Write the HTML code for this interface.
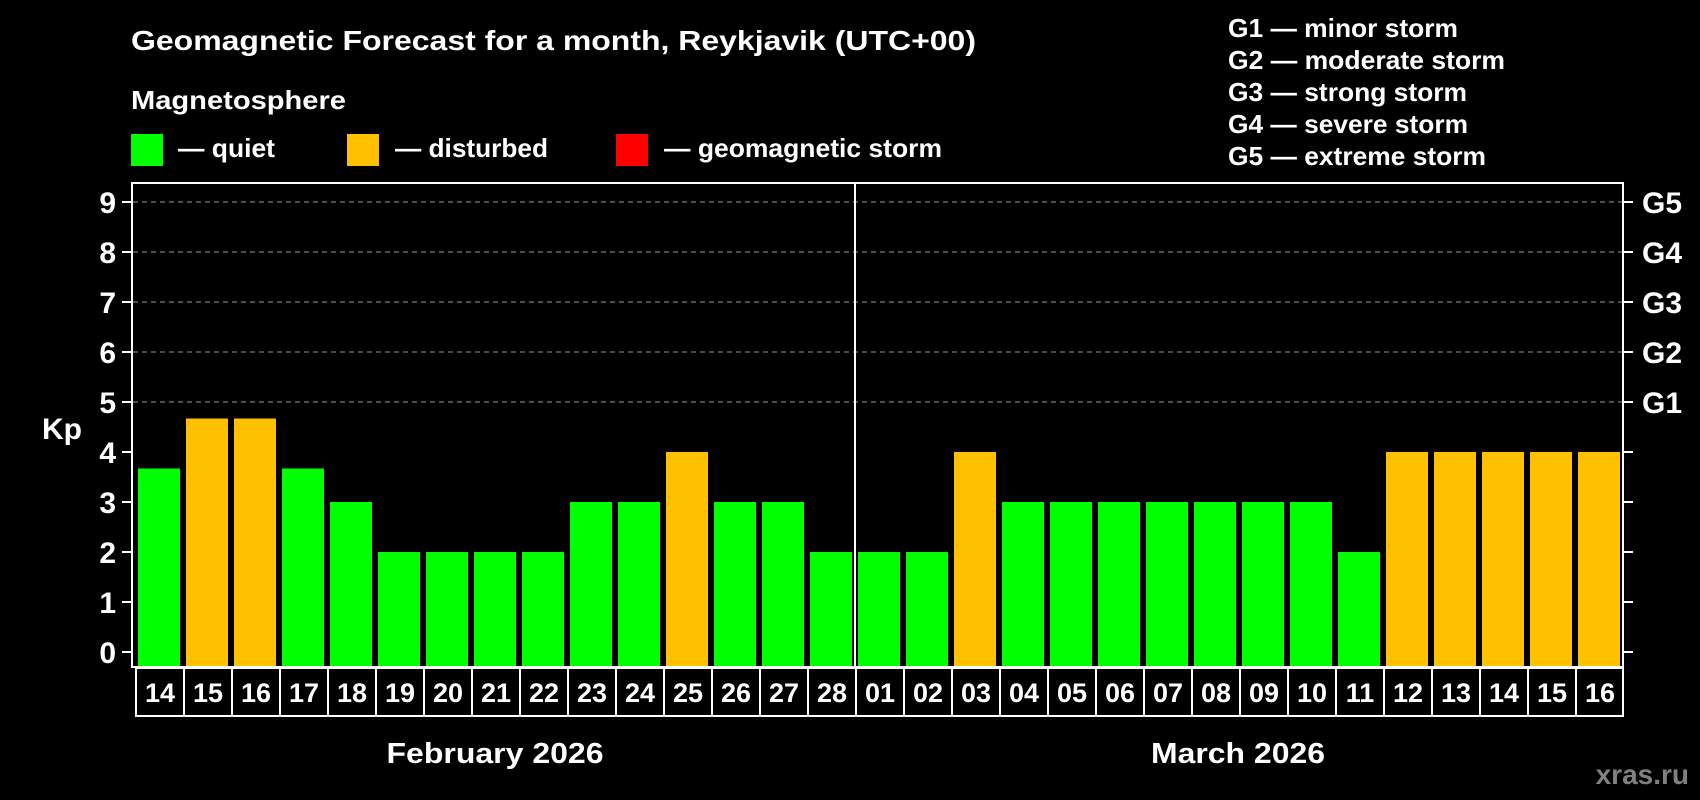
<!DOCTYPE html>
<html><head><meta charset="utf-8"><style>html,body{margin:0;padding:0;background:#000;}svg{display:block}</style></head>
<body>
<svg width="1700" height="800" viewBox="0 0 1700 800" xmlns="http://www.w3.org/2000/svg" font-family="Liberation Sans, Arial, sans-serif" font-weight="bold" fill="#fff">
<rect width="1700" height="800" fill="#000"/>
<text x="131" y="50" font-size="28" textLength="845" lengthAdjust="spacingAndGlyphs">Geomagnetic Forecast for a month, Reykjavik (UTC+00)</text>
<text x="131" y="109" font-size="26" textLength="215" lengthAdjust="spacingAndGlyphs">Magnetosphere</text>
<rect x="131" y="134" width="32" height="32" fill="#00ff00"/>
<text x="178" y="157" font-size="26" textLength="97" lengthAdjust="spacingAndGlyphs">— quiet</text>
<rect x="347" y="134" width="32" height="32" fill="#ffc000"/>
<text x="395" y="157" font-size="26" textLength="153" lengthAdjust="spacingAndGlyphs">— disturbed</text>
<rect x="616" y="134" width="32" height="32" fill="#ff0000"/>
<text x="664" y="157" font-size="26" textLength="278" lengthAdjust="spacingAndGlyphs">— geomagnetic storm</text>
<g font-size="26">
<text x="1228" y="37" textLength="230" lengthAdjust="spacingAndGlyphs">G1 — minor storm</text>
<text x="1228" y="69" textLength="277" lengthAdjust="spacingAndGlyphs">G2 — moderate storm</text>
<text x="1228" y="101" textLength="239" lengthAdjust="spacingAndGlyphs">G3 — strong storm</text>
<text x="1228" y="133" textLength="240" lengthAdjust="spacingAndGlyphs">G4 — severe storm</text>
<text x="1228" y="165" textLength="258" lengthAdjust="spacingAndGlyphs">G5 — extreme storm</text>
</g>
<g stroke="#999" stroke-width="1" stroke-dasharray="5,4">
<line x1="133" y1="202" x2="1622" y2="202"/>
<line x1="133" y1="252" x2="1622" y2="252"/>
<line x1="133" y1="302" x2="1622" y2="302"/>
<line x1="133" y1="352" x2="1622" y2="352"/>
<line x1="133" y1="402" x2="1622" y2="402"/>
</g>
<g>
<rect x="138" y="468.5" width="42" height="198.5" fill="#00ff00"/>
<rect x="186" y="418.5" width="42" height="248.5" fill="#ffc000"/>
<rect x="234" y="418.5" width="42" height="248.5" fill="#ffc000"/>
<rect x="282" y="468.5" width="42" height="198.5" fill="#00ff00"/>
<rect x="330" y="502" width="42" height="165" fill="#00ff00"/>
<rect x="378" y="552" width="42" height="115" fill="#00ff00"/>
<rect x="426" y="552" width="42" height="115" fill="#00ff00"/>
<rect x="474" y="552" width="42" height="115" fill="#00ff00"/>
<rect x="522" y="552" width="42" height="115" fill="#00ff00"/>
<rect x="570" y="502" width="42" height="165" fill="#00ff00"/>
<rect x="618" y="502" width="42" height="165" fill="#00ff00"/>
<rect x="666" y="452" width="42" height="215" fill="#ffc000"/>
<rect x="714" y="502" width="42" height="165" fill="#00ff00"/>
<rect x="762" y="502" width="42" height="165" fill="#00ff00"/>
<rect x="810" y="552" width="42" height="115" fill="#00ff00"/>
<rect x="858" y="552" width="42" height="115" fill="#00ff00"/>
<rect x="906" y="552" width="42" height="115" fill="#00ff00"/>
<rect x="954" y="452" width="42" height="215" fill="#ffc000"/>
<rect x="1002" y="502" width="42" height="165" fill="#00ff00"/>
<rect x="1050" y="502" width="42" height="165" fill="#00ff00"/>
<rect x="1098" y="502" width="42" height="165" fill="#00ff00"/>
<rect x="1146" y="502" width="42" height="165" fill="#00ff00"/>
<rect x="1194" y="502" width="42" height="165" fill="#00ff00"/>
<rect x="1242" y="502" width="42" height="165" fill="#00ff00"/>
<rect x="1290" y="502" width="42" height="165" fill="#00ff00"/>
<rect x="1338" y="552" width="42" height="115" fill="#00ff00"/>
<rect x="1386" y="452" width="42" height="215" fill="#ffc000"/>
<rect x="1434" y="452" width="42" height="215" fill="#ffc000"/>
<rect x="1482" y="452" width="42" height="215" fill="#ffc000"/>
<rect x="1530" y="452" width="42" height="215" fill="#ffc000"/>
<rect x="1578" y="452" width="42" height="215" fill="#ffc000"/>
</g>
<line x1="855" y1="183" x2="855" y2="667" stroke="#fff" stroke-width="2"/>
<rect x="132" y="183" width="1491" height="484" fill="none" stroke="#fff" stroke-width="2"/>
<g stroke="#fff" stroke-width="2">
<line x1="122" y1="652" x2="131" y2="652"/><line x1="1623" y1="652" x2="1633" y2="652"/>
<line x1="122" y1="602" x2="131" y2="602"/><line x1="1623" y1="602" x2="1633" y2="602"/>
<line x1="122" y1="552" x2="131" y2="552"/><line x1="1623" y1="552" x2="1633" y2="552"/>
<line x1="122" y1="502" x2="131" y2="502"/><line x1="1623" y1="502" x2="1633" y2="502"/>
<line x1="122" y1="452" x2="131" y2="452"/><line x1="1623" y1="452" x2="1633" y2="452"/>
<line x1="122" y1="402" x2="131" y2="402"/><line x1="1623" y1="402" x2="1633" y2="402"/>
<line x1="122" y1="352" x2="131" y2="352"/><line x1="1623" y1="352" x2="1633" y2="352"/>
<line x1="122" y1="302" x2="131" y2="302"/><line x1="1623" y1="302" x2="1633" y2="302"/>
<line x1="122" y1="252" x2="131" y2="252"/><line x1="1623" y1="252" x2="1633" y2="252"/>
<line x1="122" y1="202" x2="131" y2="202"/><line x1="1623" y1="202" x2="1633" y2="202"/>
</g>
<g font-size="30" text-anchor="end">
<text x="116" y="663">0</text><text x="116" y="613">1</text><text x="116" y="563">2</text><text x="116" y="513">3</text><text x="116" y="463">4</text>
<text x="116" y="413">5</text><text x="116" y="363">6</text><text x="116" y="313">7</text><text x="116" y="263">8</text><text x="116" y="213">9</text>
</g>
<g font-size="30">
<text x="1642" y="213">G5</text><text x="1642" y="263">G4</text><text x="1642" y="313">G3</text><text x="1642" y="363">G2</text><text x="1642" y="413">G1</text>
</g>
<text x="42" y="439" font-size="30">Kp</text>
<g fill="none" stroke="#fff" stroke-width="2">
<rect x="136" y="668" width="1487" height="48"/>
<path d="M184 668V716M232 668V716M280 668V716M328 668V716M376 668V716M424 668V716M472 668V716M520 668V716M568 668V716M616 668V716M664 668V716M712 668V716M760 668V716M808 668V716M856 668V716M904 668V716M952 668V716M1000 668V716M1048 668V716M1096 668V716M1144 668V716M1192 668V716M1240 668V716M1288 668V716M1336 668V716M1384 668V716M1432 668V716M1480 668V716M1528 668V716M1576 668V716"/>
</g>
<g font-size="27" text-anchor="middle">
<text x="160" y="702">14</text><text x="208" y="702">15</text><text x="256" y="702">16</text><text x="304" y="702">17</text><text x="352" y="702">18</text><text x="400" y="702">19</text><text x="448" y="702">20</text><text x="496" y="702">21</text><text x="544" y="702">22</text><text x="592" y="702">23</text><text x="640" y="702">24</text><text x="688" y="702">25</text><text x="736" y="702">26</text><text x="784" y="702">27</text><text x="832" y="702">28</text>
<text x="880" y="702">01</text><text x="928" y="702">02</text><text x="976" y="702">03</text><text x="1024" y="702">04</text><text x="1072" y="702">05</text><text x="1120" y="702">06</text><text x="1168" y="702">07</text><text x="1216" y="702">08</text><text x="1264" y="702">09</text><text x="1312" y="702">10</text><text x="1360" y="702">11</text><text x="1408" y="702">12</text><text x="1456" y="702">13</text><text x="1504" y="702">14</text><text x="1552" y="702">15</text><text x="1600" y="702">16</text>
</g>
<text x="495" y="763" font-size="29" text-anchor="middle" textLength="217" lengthAdjust="spacingAndGlyphs">February 2026</text>
<text x="1238" y="763" font-size="29" text-anchor="middle" textLength="174" lengthAdjust="spacingAndGlyphs">March 2026</text>
<text x="1689" y="784" font-size="28" text-anchor="end" fill="#808080">xras.ru</text>
</svg>
</body></html>
